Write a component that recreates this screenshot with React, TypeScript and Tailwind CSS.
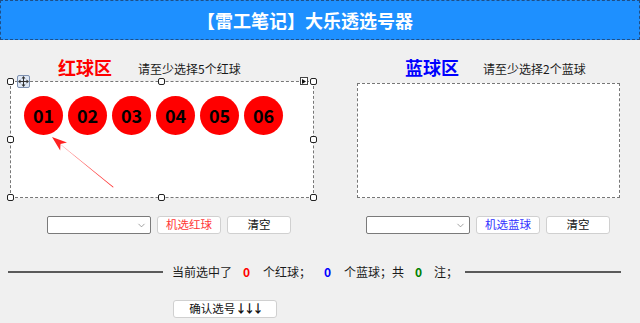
import { ChevronDown } from "lucide-react";

const FONT = "font-['Microsoft_YaHei','Noto_Sans_CJK_SC',sans-serif]";

const Handle = ({ className }: { className: string }) => (
    <div className={`absolute w-[7px] h-[7px] bg-white border border-[#222] rounded-[2px] ${className}`} />
);

const Combo = () => (
    <div className="w-[104px] h-[18px] bg-white border border-[#7a7a7a] rounded-[2px] flex items-center justify-end pr-[3px]">
        <ChevronDown size={11} strokeWidth={1.5} className="text-[#777]" />
    </div>
);

const Btn = ({ label, color }: { label: string; color: string }) => (
    <button className={`w-[64px] h-[18px] bg-white border border-[#d0d0d0] rounded-[3px] text-[11.5px] leading-none ${color}`}>
        {label}
    </button>
);

const App = () => {
    const balls = ["01", "02", "03", "04", "05", "06"];

    return (
        <div className={`relative w-[640px] h-[323px] bg-[#f0f0f0] overflow-hidden text-[#1a1a1a] ${FONT}`}>
            <div className="h-10 bg-[#1e90ff] border border-dashed border-[#1f4f86] flex items-center pl-[196px] text-white font-bold text-[18px]">
                【雷工笔记】大乐透选号器
            </div>

            <div className="flex">
                {/* red zone */}
                <div className="w-[330px]">
                    <div className="mt-[16px] h-[22px] flex items-center">
                        <span className="ml-[58px] text-[18px] font-bold text-[#ff0000]">红球区</span>
                        <span className="ml-[26px] mt-[3px] text-[12px]">请至少选择5个红球</span>
                    </div>
                    <div className="relative ml-[10px] mt-[3px] w-[304px] h-[117px] bg-white border border-dashed border-[#777]">
                        <div className="flex gap-[5px] pl-[13px] pt-[14px]">
                            {balls.map((b) => (
                                <div key={b} className="w-[39px] h-[39px] rounded-full bg-[#ff0000] flex items-center justify-center text-[18px] font-bold text-black">
                                    {b}
                                </div>
                            ))}
                        </div>
                        <Handle className="-left-[4px] -top-[4px]" />
                        <Handle className="left-[147px] -top-[4px]" />
                        <Handle className="-right-[4px] -top-[4px]" />
                        <Handle className="-left-[4px] top-[54px]" />
                        <Handle className="-right-[4px] top-[54px]" />
                        <Handle className="-left-[4px] -bottom-[4px]" />
                        <Handle className="left-[147px] -bottom-[4px]" />
                        <Handle className="-right-[4px] -bottom-[4px]" />
                        <div className="absolute left-[6px] -top-[7px] w-[13px] h-[13px] bg-[#dfe8f5] border border-[#7d90b0] rounded-[2px] flex items-center justify-center">
                            <svg width="11" height="11" viewBox="0 0 11 11" fill="#333">
                                <path d="M5.5 0 L7.5 2.5 L3.5 2.5 Z M5.5 11 L7.5 8.5 L3.5 8.5 Z M0 5.5 L2.5 3.5 L2.5 7.5 Z M11 5.5 L8.5 3.5 L8.5 7.5 Z" />
                                <rect x="5" y="2" width="1" height="7" />
                                <rect x="2" y="5" width="7" height="1" />
                            </svg>
                        </div>
                        <div className="absolute right-[5px] -top-[5px] w-[8px] h-[8px] bg-white border border-[#444] flex items-center justify-center">
                            <svg width="4" height="5" viewBox="0 0 4 5" fill="#111">
                                <path d="M0 0 L4 2.5 L0 5 Z" />
                            </svg>
                        </div>
                    </div>
                    <div className="mt-[18px] ml-[47px] flex gap-[6px]">
                        <Combo />
                        <Btn label="机选红球" color="text-[#ff3535]" />
                        <Btn label="清空" color="text-[#111]" />
                    </div>
                </div>

                {/* blue zone */}
                <div className="w-[310px]">
                    <div className="mt-[16px] h-[22px] flex items-center">
                        <span className="ml-[75px] text-[18px] font-bold text-[#0000ff]">蓝球区</span>
                        <span className="ml-[24px] mt-[3px] text-[12px]">请至少选择2个蓝球</span>
                    </div>
                    <div className="ml-[27px] mt-[5px] w-[263px] h-[115px] bg-white border border-dashed border-[#777]" />
                    <div className="mt-[18px] ml-[36px] flex gap-[6px]">
                        <Combo />
                        <Btn label="机选蓝球" color="text-[#3030ff]" />
                        <Btn label="清空" color="text-[#111]" />
                    </div>
                </div>
            </div>

            <div className="mt-[30px] h-4 flex items-center text-[12px]">
                <div className="ml-[8px] w-[155px] h-[2px] bg-[#5a5a5a]" />
                <span className="ml-[9px]">当前选中了</span>
                <span className="ml-[11px] w-[10px] font-bold text-[#ff0000]">0</span>
                <span className="ml-[10px]">个红球；</span>
                <span className="ml-[13px] w-[10px] font-bold text-[#0000ff]">0</span>
                <span className="ml-[10px]">个蓝球；共</span>
                <span className="ml-[11px] w-[10px] font-bold text-[#008000]">0</span>
                <span className="ml-[9px]">注；</span>
                <div className="ml-[7px] w-[156px] h-[2px] bg-[#5a5a5a]" />
            </div>

            <div className="mt-[14px] ml-[173px]">
                <button className="w-[104px] h-[18px] bg-white border border-[#d0d0d0] rounded-[3px] text-[11.5px] leading-none text-[#111]">
                    确认选号<span className="tracking-[-3px] font-bold">↓↓↓</span>
                </button>
            </div>

            <svg className="absolute left-0 top-0 pointer-events-none" width="640" height="323">
                <polygon points="52,137 67,142.4 60.5,144 60.2,150.6" fill="#f22" />
                <polygon points="59,143.3 62,145.5 113.6,187 113,187.6" fill="#f22" />
            </svg>
        </div>
    );
};

export default App;
